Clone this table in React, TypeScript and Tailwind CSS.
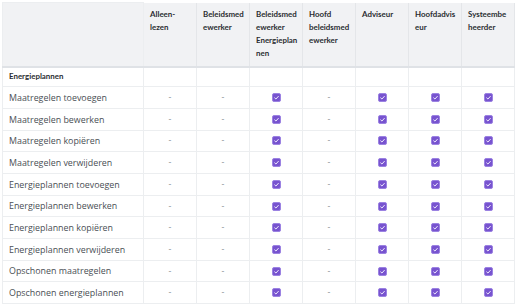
import React from "react";

const roles = [
  ["Alleen-", "lezen"],
  ["Beleidsmed", "ewerker"],
  ["Beleidsmed", "ewerker", "Energieplan", "nen"],
  ["Hoofd", "beleidsmed", "ewerker"],
  ["Adviseur"],
  ["Hoofdadvis", "eur"],
  ["Systeembe", "heerder"],
];

// true = checkbox, false = dash
const access = [false, false, true, false, true, true, true];

const rights = [
  "Maatregelen toevoegen",
  "Maatregelen bewerken",
  "Maatregelen kopiëren",
  "Maatregelen verwijderen",
  "Energieplannen toevoegen",
  "Energieplannen bewerken",
  "Energieplannen kopiëren",
  "Energieplannen verwijderen",
  "Opschonen maatregelen",
  "Opschonen energieplannen",
];

function Check() {
  return (
    <span className="inline-flex h-[9px] w-[9px] items-center justify-center rounded-[2px] border border-[#9b82e2] bg-[#7753cf] align-middle">
      <svg viewBox="0 0 10 10" className="h-[7px] w-[7px]">
        <path d="M2 5.2 L4.2 7.2 L8 3" fill="none" stroke="#f3efff" strokeWidth="1.4" />
      </svg>
    </span>
  );
}

export default function App() {
  return (
    <div className="min-h-screen bg-white p-[2px] font-['Open_Sans',sans-serif]">
      <table className="w-[512px] table-fixed border-collapse text-[8.9px]">
        <colgroup>
          <col className="w-[141px]" />
          {roles.map((_, i) => (
            <col key={i} className="w-[53px]" />
          ))}
        </colgroup>
        <thead>
          <tr className="border-b-2 border-[#dfe2e6] bg-[#f1f2f4]">
            <th className="border border-[#eceef0]" />
            {roles.map((lines, i) => (
              <th
                key={i}
                className="border-x border-[#e4e6e9] px-[6px] py-[5px] text-left align-top font-['Lato',sans-serif] text-[7.9px] font-bold leading-[13.3px] text-[#2a2d31]"
              >
                {lines.map((l, j) => (
                  <div key={j}>{l}</div>
                ))}
              </th>
            ))}
          </tr>
        </thead>
        <tbody className="text-[#4a4f55]">
          <tr className="h-[20px] border-b border-[#eceef0]">
            <td className="border-x border-[#eceef0] px-[6px] font-['Lato',sans-serif] text-[7.9px] font-bold text-[#2a2d31]">
              Energieplannen
            </td>
            {roles.map((_, i) => (
              <td key={i} className="border-x border-[#eceef0]" />
            ))}
          </tr>
          {rights.map((r) => (
            <tr key={r} className="h-[21.7px] border-b border-[#eceef0]">
              <td className="border-x border-[#eceef0] px-[6px]">{r}</td>
              {access.map((a, i) => (
                <td key={i} className="border-x border-[#eceef0] text-center leading-none">
                  {a ? <Check /> : <span className="text-[#8a8f95]">-</span>}
                </td>
              ))}
            </tr>
          ))}
        </tbody>
      </table>
    </div>
  );
}
